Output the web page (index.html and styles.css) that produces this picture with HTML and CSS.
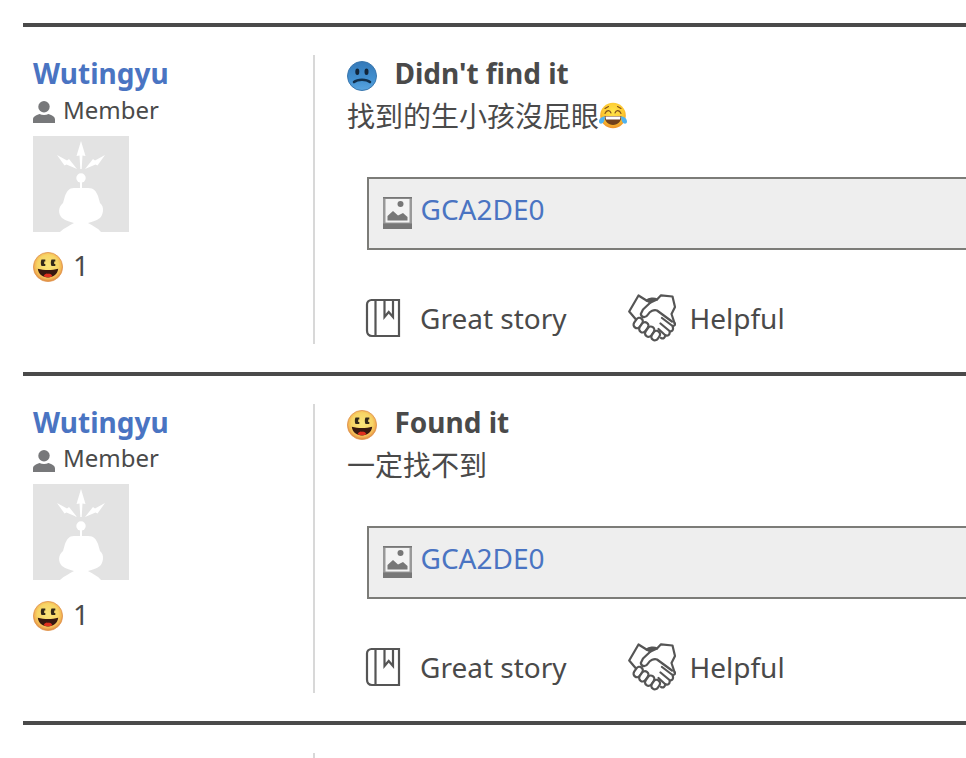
FILE: index.html
```html
<!DOCTYPE html>
<html lang="zh-Hant">
<head>
	<meta charset="utf-8">
	<title>Logs</title>
	<link rel="stylesheet" href="styles.css">
</head>
<body>
	<!-- shared icons -->
	<svg class="sprite" width="0" height="0">
		<defs>
			<radialGradient id="yellow" cx="50%" cy="45%" r="52%">
				<stop offset="0" stop-color="#fae57b"/>
				<stop offset="0.7" stop-color="#f7d465"/>
				<stop offset="0.88" stop-color="#f3b655"/>
				<stop offset="1" stop-color="#e39345"/>
			</radialGradient>
			<linearGradient id="blue" x1="0" y1="0" x2="0" y2="1">
				<stop offset="0" stop-color="#3579b8"/>
				<stop offset="0.6" stop-color="#4290d0"/>
				<stop offset="1" stop-color="#5aa5df"/>
			</linearGradient>
			<radialGradient id="joyface" cx="50%" cy="35%" r="65%">
				<stop offset="0" stop-color="#ffe64a"/>
				<stop offset="0.65" stop-color="#fdc62f"/>
				<stop offset="1" stop-color="#ee912b"/>
			</radialGradient>
		</defs>
		<symbol id="smile" viewBox="0 0 30 30">
			<circle cx="15" cy="15" r="14.6" fill="url(#yellow)" stroke="#e0944e" stroke-width="0.8"/>
			<path d="M8.500 7.500H12.300V9.500H11.200V12H12.300V14H8.500C7.600 12.500 7.600 9 8.500 7.500ZM18.500 7.500H22.300V9.500H21.200V12H22.300V14H18.500C17.600 12.500 17.600 9 18.500 7.500Z" fill="#33291a"/>
			<path d="M4.800 16.800C11 18.500 19 18.500 25.200 16.800C24.800 22 20.500 25.500 15 25.500S5.200 22 4.800 16.800Z" fill="#38180f"/>
			<path d="M10.800 24.200C11.500 21.500 13.500 22 15 21.500C16.500 22 18.500 21.500 19.200 24.200C17 25.500 13 25.500 10.800 24.200Z" fill="#e0301e"/>
		</symbol>
		<symbol id="frown" viewBox="0 0 30 30">
			<circle cx="15" cy="15" r="14.500" fill="url(#blue)" stroke="#3b77ad" stroke-width="1"/>
			<ellipse cx="10.300" cy="10.800" rx="2" ry="3.200" fill="#12263a"/>
			<ellipse cx="19.500" cy="10.800" rx="2" ry="3.200" fill="#12263a"/>
			<path d="M7 21C10.500 18 19.500 18 23 21" fill="none" stroke="#12304c" stroke-width="2.600" stroke-linecap="round"/>
		</symbol>
		<symbol id="joy" viewBox="0 0 28 28">
			<circle cx="14" cy="13.500" r="12.800" fill="url(#joyface)"/>
			<path d="M6 11.500C7.500 7.800 11 7.800 12 11M16 11C17 7.800 20.500 7.800 22 11.500M6 6.500L9.500 4.500M18.500 4.500L22 6.500" fill="none" stroke="#80501b" stroke-width="1.100" stroke-linecap="round"/>
			<path d="M5.500 14H22.500C22.300 19.500 19 23 14 23S5.700 19.500 5.500 14Z" fill="#71401c"/>
			<path d="M6.500 14.500H21.500L21 17.500H7Z" fill="#fff"/>
			<path d="M6 14.500C3 14.500 0 16.500 0 19.500C0 22.500 3.800 22.300 4.900 19.500C5.600 17.800 6 16.500 6 14.500ZM22 14.500C25 14.500 28 16.500 28 19.500C28 22.500 24.200 22.300 23.100 19.500C22.400 17.800 22 16.500 22 14.500Z" fill="#4fb3f0"/>
		</symbol>
		<symbol id="member" viewBox="0 0 22 22">
			<circle cx="11" cy="5.700" r="5.700" fill="#77787a"/>
			<path d="M0 22V18.500C0 15.500 3 14.500 6.500 13C9 14.300 13 14.300 15.500 13C19 14.500 22 15.500 22 18.500V22Z" fill="#77787a"/>
		</symbol>
		<symbol id="avatar" viewBox="0 0 96 96">
			<path d="M0 0H96V96H0Z" fill="#e3e3e3"/>
			<path d="M48 5L52.500 20L49.500 19.500L48.700 33H47.300L46.500 19.500L43.500 20ZM24 19L34 24.500L36 23L44 33L33.500 28.500L31.500 29.500ZM72 19L62 24.500L60 23L52 33L62.500 28.500L64.500 29.500Z" fill="#fff"/>
			<circle cx="48" cy="42" r="4.700" fill="#fff"/>
			<path d="M47 44H49V52H55C61 52 63 55 65 60L67 67C72 71 70 79 67 82C63 85 58 86 55 87C60 90 65 92 68 96H27C31 92 36 90 41 87C38 86 33 85 29 82C25 78 25 71 30 67L32 60C34 55 36 52 41 52H47Z" fill="#fff"/>
		</symbol>
		<symbol id="photo" viewBox="0 0 29 32">
			<path d="M0 0H29V32H0Z" fill="#777"/>
			<path d="M0 0H29V26.500H0Z" fill="#999"/>
			<path d="M0 0H29V1.500H0Z" fill="#777"/>
			<path d="M2.500 2H26.500V25.500H2.500Z" fill="#f3f3f3"/>
			<circle cx="17.500" cy="7" r="3" fill="#777"/>
			<path d="M4.500 23.500V19L10 14L15 18.500L20 16L24.500 20V23.500Z" fill="#777"/>
		</symbol>
		<symbol id="book" viewBox="0 0 36 40">
			<path d="M34 2H6.500C4 2 2 4 2 6.500V32.500C2 36 4 38 7 38H34ZM10.500 2V38M19.500 2V19L23.700 14L28 19V2" fill="none" stroke="#555" stroke-width="2.200"/>
		</symbol>
		<symbol id="hands" viewBox="0 0 48 48">
			<g fill="none" stroke="#555" stroke-width="2.200" stroke-linejoin="round" stroke-linecap="round">
				<!-- cuffs and palms -->
				<path d="M18.500 6.500L10.500 1.500L1.200 17.500L8 25.500M29 5.500L33 1.300L44.500 2.500L47 13L43.500 20L46.500 29"/>
				<path d="M23 8L15 15.500L12.800 20C13.500 24 18 24 20 20.500C22 17 26 15.500 29 16.500L44 27.500"/>
				<path d="M18.500 6.500C21 4.500 26 4 29 5.500L22.500 8.500Z" fill="#555"/>
				<!-- right hand fingers -->
				<path d="M34 24L44.500 32C47.500 31.500 47.500 30 46.500 29M44.500 32C46 36 44 38 41.500 37L32.500 29.500M41.500 37C42.500 41 39.500 42.500 37 41L30.500 35M37 41C37.500 44 35 45 33 44"/>
				<!-- left hand fingers -->
				<g fill="#fff">
					<rect x="6.700" y="23.500" width="7" height="11" rx="3.500" transform="rotate(35 10.200 29)"/>
					<rect x="12.300" y="27.800" width="7" height="11" rx="3.500" transform="rotate(35 15.800 33.300)"/>
					<rect x="18.200" y="32.200" width="7" height="11" rx="3.500" transform="rotate(35 21.700 37.700)"/>
					<rect x="24.200" y="36.600" width="7" height="10" rx="3.500" transform="rotate(35 27.700 41.600)"/>
				</g>
			</g>
		</symbol>
	</svg>

	<div class="logs">
		<div class="log">
			<div class="logOwner">
				<a class="userName">Wutingyu</a>
				<div class="memberType"><svg width="22" height="22"><use href="#member"/></svg>Member</div>
				<svg class="avatar" width="96" height="96"><use href="#avatar"/></svg>
				<div class="findCount"><svg width="30" height="30"><use href="#smile"/></svg>1</div>
			</div>
			<div class="logContent">
				<div class="logType"><svg width="30" height="30"><use href="#frown"/></svg>Didn't find it</div>
				<div class="logText">找到的生小孩沒屁眼<svg width="28" height="28" aria-label="😂"><use href="#joy"/></svg></div>
				<div class="logImage"><svg width="29" height="32"><use href="#photo"/></svg><a>GCA2DE0</a></div>
				<div class="actions">
					<div class="action story"><svg width="36" height="40"><use href="#book"/></svg>Great story</div>
					<div class="action"><svg width="48" height="48"><use href="#hands"/></svg>Helpful</div>
				</div>
			</div>
		</div>

		<div class="log">
			<div class="logOwner">
				<a class="userName">Wutingyu</a>
				<div class="memberType tight"><svg width="22" height="22"><use href="#member"/></svg>Member</div>
				<svg class="avatar" width="96" height="96"><use href="#avatar"/></svg>
				<div class="findCount loose"><svg width="30" height="30"><use href="#smile"/></svg>1</div>
			</div>
			<div class="logContent">
				<div class="logType"><svg width="30" height="30"><use href="#smile"/></svg>Found it</div>
				<div class="logText">一定找不到</div>
				<div class="logImage"><svg width="29" height="32"><use href="#photo"/></svg><a>GCA2DE0</a></div>
				<div class="actions">
					<div class="action story"><svg width="36" height="40"><use href="#book"/></svg>Great story</div>
					<div class="action"><svg width="48" height="48"><use href="#hands"/></svg>Helpful</div>
				</div>
			</div>
		</div>

		<div class="log lastLog">
			<div class="logOwner"></div>
			<div class="logContent"></div>
		</div>
	</div>
</body>
</html>
```
FILE: styles.css
```css
* {
	box-sizing: border-box;
}

body {
	margin: 0;
	background: #fff;
	color: #4a4a4a;
	font-family: "Noto Sans", "Noto Sans CJK TC", sans-serif;
	font-size: 28px;
	line-height: 36px;
}

svg {
	display: block;
	flex: none;
}

.sprite {
	position: absolute;
}

.logs {
	padding: 23px 0 0 23px;
}

.log {
	display: flex;
	height: 349px;
	padding: 28px 0;
	border-top: 4px solid #4a4a4a;
}

.lastLog {
	height: 37px;
	padding-bottom: 0;
}

.logOwner {
	width: 292px;
	padding-left: 10px;
	border-right: 2px solid #d8d8d8;
}

.logContent {
	flex: 1;
	padding-left: 32px;
}

.userName {
	display: block;
	color: #4a74c2;
	font-weight: bold;
}

.memberType {
	display: flex;
	align-items: center;
	gap: 8px;
	height: 45px;
	padding-bottom: 7px;
	font-size: 24px;
}

.memberType.tight {
	height: 44px;
	padding-bottom: 8px;
}

.memberType svg {
	margin-top: 3px;
}

.memberType.tight svg {
	margin-top: 5px;
}

.findCount {
	display: flex;
	align-items: center;
	gap: 10px;
	margin-top: 15px;
}

.findCount.loose {
	margin-top: 16px;
}

.findCount svg {
	margin-top: 3px;
}

.logType {
	display: flex;
	align-items: center;
	gap: 17.5px;
	font-weight: bold;
}

.logType svg {
	margin-top: 6px;
}

.logText {
	display: flex;
	align-items: center;
	height: 50px;
}

.logText svg {
	margin-bottom: 1px;
}

.logImage {
	display: flex;
	align-items: center;
	gap: 9px;
	height: 73px;
	margin: 36px 0 0 20px;
	padding: 0 0 10px 13.5px;
	background: #eee;
	border: 2px solid #7c7c78;
	border-right: 0;
}

.logImage svg {
	margin-top: 8px;
}

.logImage a {
	color: #4a74c2;
}

.actions {
	display: flex;
	margin: 43px 0 0 17px;
}

.action {
	display: flex;
	align-items: center;
	gap: 13.5px;
	height: 50px;
}

.story {
	gap: 19px;
	width: 263px;
	margin-left: 1px;
}
```
